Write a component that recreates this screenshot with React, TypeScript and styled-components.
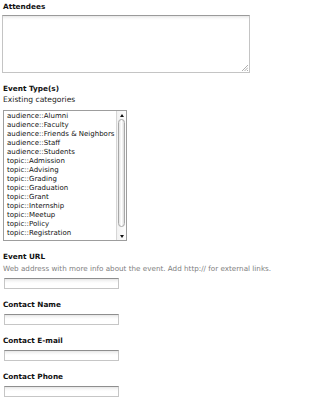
import React from 'react';
import styled, { createGlobalStyle } from 'styled-components';

const GlobalStyle = createGlobalStyle`
  html, body {
    margin: 0;
    padding: 0;
    background: #fff;
  }
  body {
    font-family: "DejaVu Sans", "Liberation Sans", sans-serif;
    color: #111;
  }
`;

const Form = styled.form`
  display: flex;
  flex-direction: column;
  padding: 2px 0 0 3px;
  width: 279px;
  box-sizing: border-box;
`;

const Field = styled.div`
  display: flex;
  flex-direction: column;
  margin-bottom: 11px;
`;

const Label = styled.label`
  display: block;
  font-weight: bold;
  font-size: 7.3px;
  line-height: 10px;
  height: 10px;
  color: #111;
`;

const SubLabel = styled.div`
  font-size: 7.6px;
  line-height: 10px;
  height: 10px;
  color: #222;
  margin-top: 1px;
`;

const Help = styled.div`
  font-size: 7.2px;
  line-height: 10px;
  height: 10px;
  color: #808080;
  white-space: nowrap;
  margin-top: 2px;
`;

const TextArea = styled.div`
  position: relative;
  margin: 3px 0 0 -1px;
  width: 248px;
  height: 58px;
  box-sizing: border-box;
  border: 1px solid #c4c4c4;
  border-top-color: #9a9a9a;
  background: linear-gradient(#e8e8e8 0, #f7f7f7 2px, #fff 4px);
`;

const Grip = styled.svg`
  position: absolute;
  right: 1px;
  bottom: 1px;
`;

const TextInput = styled.div`
  margin: 4px 0 0 1px;
  width: 115px;
  height: 11px;
  box-sizing: border-box;
  border: 1px solid #c6c6c6;
  border-top-color: #8e8e8e;
  background: linear-gradient(#e6e6e6 0, #f6f6f6 2px, #fff 4px);
`;

const ListBox = styled.div`
  display: flex;
  margin-top: 5px;
  width: 124px;
  height: 131px;
  box-sizing: border-box;
  border: 1px solid #9d9d9d;
  background: #fff;
`;

const Options = styled.ul`
  flex: 1;
  list-style: none;
  margin: 0;
  padding: 1px 0 0 3px;
  overflow: hidden;
`;

const Option = styled.li`
  font-size: 7px;
  line-height: 9px;
  height: 9px;
  white-space: nowrap;
  color: #111;
`;

const ScrollBar = styled.div`
  display: flex;
  flex-direction: column;
  width: 9px;
  border-left: 1px solid #d6d6d6;
  background: linear-gradient(to right, #f2f2f2, #fdfdfd);
`;

const Arrow = styled.div<{ $down?: boolean }>`
  height: 8px;
  display: flex;
  align-items: center;
  justify-content: center;
  &::after {
    content: '';
    border-left: 2px solid transparent;
    border-right: 2px solid transparent;
    ${p => (p.$down ? 'border-top: 3px solid #111;' : 'border-bottom: 3px solid #111;')}
  }
`;

const Track = styled.div`
  flex: 1;
  display: flex;
  flex-direction: column;
  padding: 0 1px;
`;

const Thumb = styled.div`
  height: 108px;
  box-sizing: border-box;
  border: 1px solid #a8a8a8;
  border-radius: 4px;
  background: linear-gradient(to right, #e4e4e4, #ffffff 50%, #dcdcdc);
`;

const categories = [
  'audience::Alumni',
  'audience::Faculty',
  'audience::Friends & Neighbors',
  'audience::Staff',
  'audience::Students',
  'topic::Admission',
  'topic::Advising',
  'topic::Grading',
  'topic::Graduation',
  'topic::Grant',
  'topic::Internship',
  'topic::Meetup',
  'topic::Policy',
  'topic::Registration',
];

const App: React.FC = () => {
  return (
    <>
      <GlobalStyle />
      <Form>
        <Field>
          <Label>Attendees</Label>
          <TextArea>
            <Grip width="6" height="6" viewBox="0 0 6 6">
              <path d="M6 0L0 6M6 2.5L2.5 6M6 5L5 6" stroke="#9a9a9a" strokeWidth="0.8" />
            </Grip>
          </TextArea>
        </Field>
        <Field>
          <Label>Event Type(s)</Label>
          <SubLabel>Existing categories</SubLabel>
          <ListBox>
            <Options>
              {categories.map(c => (
                <Option key={c}>{c}</Option>
              ))}
            </Options>
            <ScrollBar>
              <Arrow />
              <Track>
                <Thumb />
              </Track>
              <Arrow $down />
            </ScrollBar>
          </ListBox>
        </Field>
        <Field>
          <Label>Event URL</Label>
          <Help>Web address with more info about the event. Add http:// for external links.</Help>
          <TextInput />
        </Field>
        <Field>
          <Label>Contact Name</Label>
          <TextInput />
        </Field>
        <Field>
          <Label>Contact E-mail</Label>
          <TextInput />
        </Field>
        <Field>
          <Label>Contact Phone</Label>
          <TextInput />
        </Field>
      </Form>
    </>
  );
};

export default App;
